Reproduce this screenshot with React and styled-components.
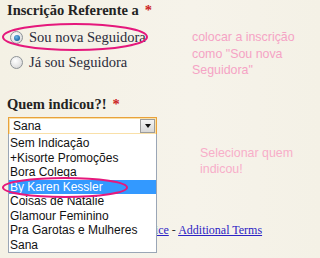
import React from 'react';
import styled, { createGlobalStyle } from 'styled-components';

const GlobalStyle = createGlobalStyle`
  body {
    margin: 0;
    background: #f5f2e7;
    font-family: "Liberation Serif", serif;
  }
`;

const Page = styled.div`
  position: relative;
  width: 320px;
  height: 258px;
  overflow: hidden;
  display: grid;
  grid-template-columns: 180px 1fr;
  background: linear-gradient(90deg, #f4f1e5 0%, #f6f3ea 60%, #f4f1e6 100%);
`;

const Form = styled.div`
  position: relative;
  padding: 1px 0 0 7px;
`;

const Heading = styled.div`
  font-weight: bold;
  font-size: 14.5px;
  line-height: 18px;
  color: #232323;
  margin-top: ${(p) => p.$top || 0}px;
`;

const Req = styled.span`
  color: #cc2222;
  margin-left: 6px;
`;

const Options = styled.div`
  margin-top: 6px;
`;

const Option = styled.label`
  display: flex;
  align-items: center;
  gap: 6px;
  height: 25px;
  padding-left: 3px;
  font-size: 14.5px;
  color: #2a2a3a;
`;

const Radio = styled.span`
  width: 11px;
  height: 11px;
  border-radius: 50%;
  border: 1px solid #8e9397;
  background: radial-gradient(circle at 40% 35%, #ffffff 0%, #e4e4e4 60%, #c8c8c8 100%);
  display: flex;
  align-items: center;
  justify-content: center;
  &::after {
    content: '';
    display: ${(p) => (p.$checked ? 'block' : 'none')};
    width: 6px;
    height: 6px;
    border-radius: 50%;
    background: radial-gradient(circle at 40% 35%, #6fb7e8 0%, #1d6aa8 70%, #0f4c80 100%);
  }
`;

const Select = styled.div`
  position: relative;
  box-sizing: border-box;
  width: 149px;
  height: 18px;
  margin: 4px 0 0 1px;
  border: 1px solid #e9a23b;
  box-shadow: inset 0 0 0 1px #f9e0a8;
  background: #fff;
  display: flex;
  align-items: center;
  justify-content: space-between;
  font-family: "Liberation Sans", sans-serif;
  font-size: 12px;
  color: #111;
  padding: 0 1px 0 4px;
`;

const Arrow = styled.span`
  box-sizing: border-box;
  width: 15px;
  height: 14px;
  border: 1px solid #9c9c9c;
  background: linear-gradient(#f4f4f4, #d8d8d8);
  display: flex;
  align-items: center;
  justify-content: center;
  &::after {
    content: '';
    border-left: 3.5px solid transparent;
    border-right: 3.5px solid transparent;
    border-top: 4px solid #111;
  }
`;

const List = styled.ul`
  position: absolute;
  left: 8px;
  top: 134px;
  box-sizing: border-box;
  width: 149px;
  height: 119px;
  margin: 0;
  padding: 2px 0 0;
  list-style: none;
  background: #fff;
  border: 1px solid #9aa6b6;
  border-top: none;
  font-family: "Liberation Sans", sans-serif;
  font-size: 12px;
  z-index: 2;
`;

const Item = styled.li`
  height: 14.5px;
  line-height: 14.5px;
  padding-left: 1px;
  white-space: nowrap;
  color: ${(p) => (p.$active ? '#fff' : '#111')};
  background: ${(p) => (p.$active ? '#3399ff' : 'transparent')};
`;

const Footer = styled.div`
  margin-top: 88px;
  padding-left: 80px;
  white-space: nowrap;
  font-size: 12px;
  color: #333;
`;

const Link = styled.a`
  color: #2b22c4;
  text-decoration: underline;
`;

const Notes = styled.div`
  display: flex;
  flex-direction: column;
  padding-top: 29px;
  font-family: "Liberation Sans", sans-serif;
  font-size: 12.4px;
  line-height: 16.5px;
`;

const Note = styled.div`
  margin-left: ${(p) => p.$indent}px;
  margin-top: ${(p) => p.$top || 0}px;
  color: ${(p) => p.$color};
`;

const Ring = styled.svg`
  position: absolute;
  overflow: visible;
  pointer-events: none;
  z-index: 3;
`;

const Ellipse = ({ x, y, w, h }) => (
  <Ring style={{ left: x, top: y, width: w, height: h }} viewBox={`0 0 ${w} ${h}`}>
    <ellipse cx={w / 2} cy={h / 2} rx={w / 2 - 1} ry={h / 2 - 1} fill="none" stroke="#e5187c" strokeWidth="2" />
  </Ring>
);

const people = [
  'Sem Indicação',
  '+Kisorte Promoções',
  'Bora Colega',
  'By Karen Kessler',
  'Coisas de Natalie',
  'Glamour Feminino',
  'Pra Garotas e Mulheres',
  'Sana',
];

export default function App() {
  return (
    <>
      <GlobalStyle />
      <Page>
        <Form>
          <Heading>
            Inscrição Referente a<Req>*</Req>
          </Heading>
          <Options>
            <Option>
              <Radio $checked />
              Sou nova Seguidora
            </Option>
            <Option>
              <Radio />
              Já sou Seguidora
            </Option>
          </Options>
          <Heading $top={20}>
            Quem indicou?!<Req>*</Req>
          </Heading>
          <Select>
            Sana
            <Arrow />
          </Select>
          <Footer>
            <Link>Terms of Service</Link> - <Link>Additional Terms</Link>
          </Footer>
        </Form>
        <Notes>
          <Note $indent={12} $color="#f5a3c5">
            colocar a inscrição
            <br />
            como "Sou nova
            <br />
            Seguidora"
          </Note>
          <Note $indent={20} $top={66} $color="#f8aec9">
            Selecionar quem
            <br />
            indicou!
          </Note>
        </Notes>
        <List>
          {people.map((name) => (
            <Item key={name} $active={name === 'By Karen Kessler'}>
              {name}
            </Item>
          ))}
        </List>
        <Ellipse x={2} y={23} w={146} h={28} />
        <Ellipse x={2} y={177} w={126} h={21} />
      </Page>
    </>
  );
}
